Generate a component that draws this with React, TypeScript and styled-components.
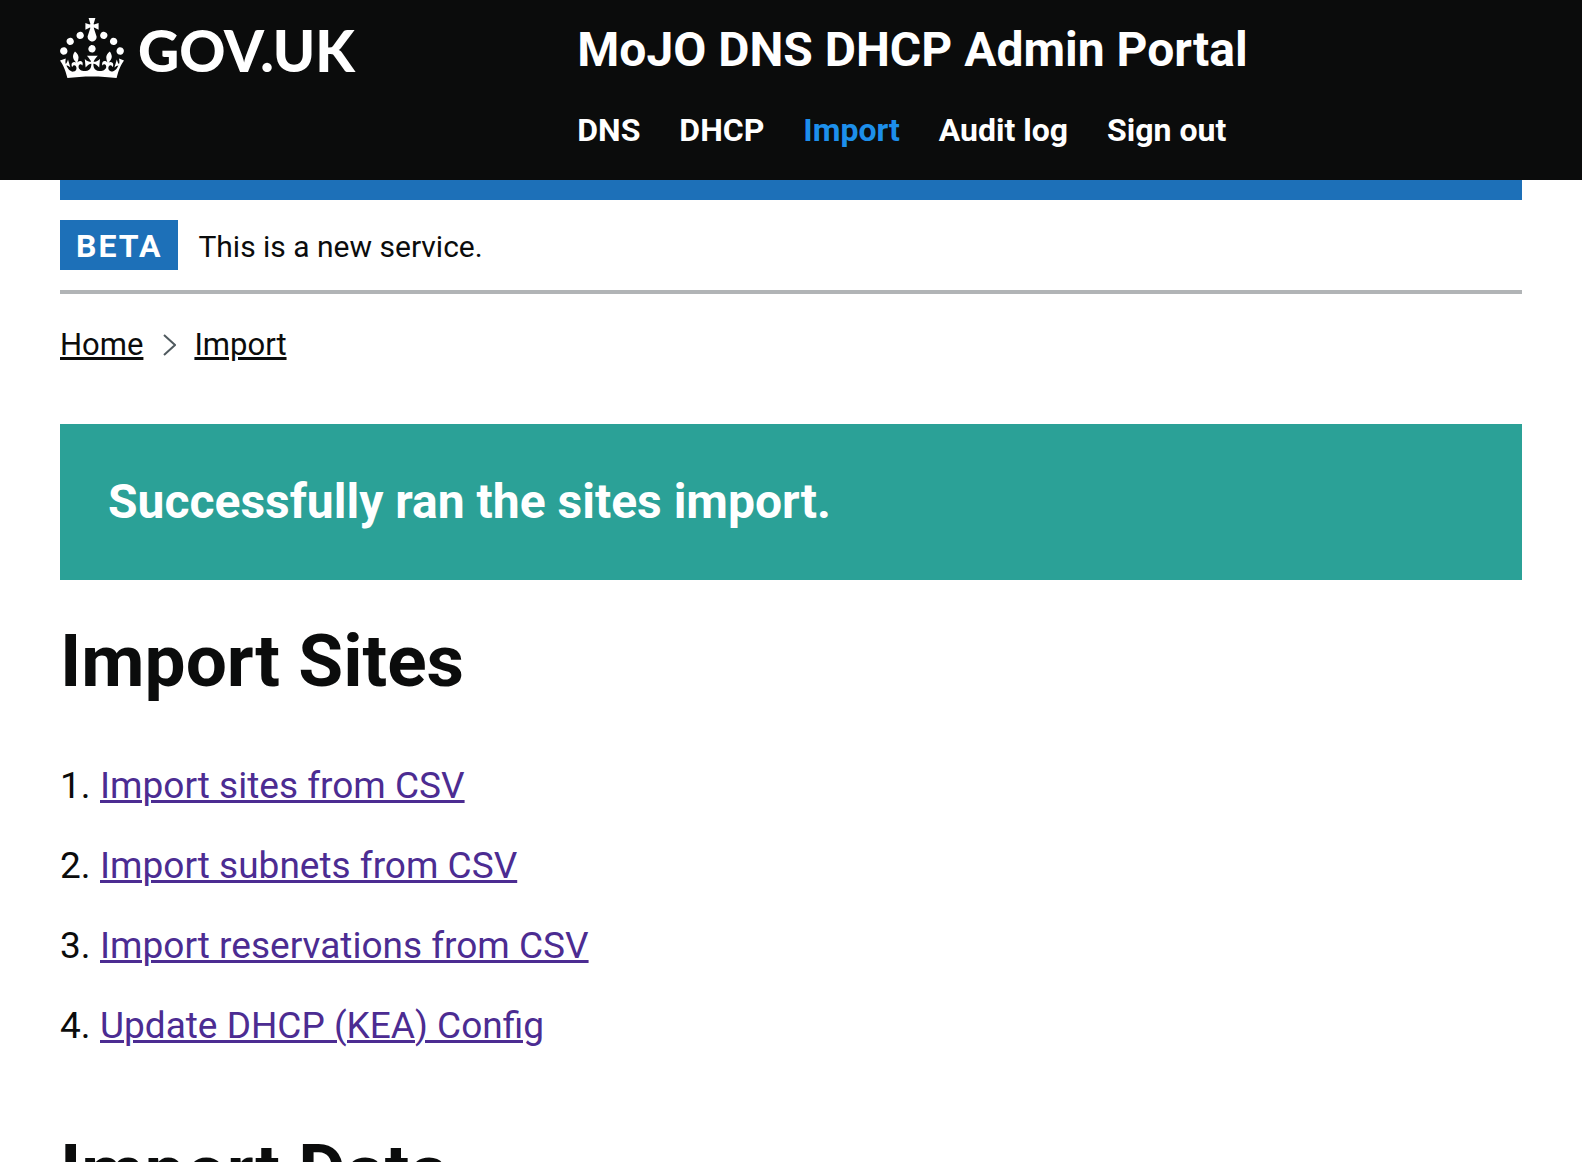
import React from "react";
import styled, { createGlobalStyle } from "styled-components";

const ink = "#0b0c0c";
const blue = "#1d70b8";
const gutter = "60px";

const GlobalStyle = createGlobalStyle`
  *, *::before, *::after { box-sizing: border-box; }
  html { scrollbar-width: none; }
  body {
    margin: 0;
    background: #ffffff;
    color: ${ink};
    font-family: "Roboto", "Liberation Sans", Arial, sans-serif;
  }
`;

const Header = styled.header`
  background: ${ink};
  color: #ffffff;
`;

const HeaderInner = styled.div`
  display: flex;
  gap: 30px;
  padding: 18px ${gutter} 30px;
`;

const LogoColumn = styled.div`
  flex: 0 0 33.33%;
`;

const LogoLink = styled.a`
  display: inline-flex;
  align-items: flex-start;
  gap: 14px;
  color: #ffffff;
  text-decoration: none;
`;

const Crown = styled.svg`
  width: 64px;
  height: 60px;
  fill: currentColor;
`;

const LogoText = styled.span`
  font-family: "Lato", sans-serif;
  font-size: 57px;
  font-weight: 900;
  line-height: 64px;
`;

const HeaderContent = styled.div`
  flex: 1;
  padding-top: 2px;
`;

const ServiceName = styled.a`
  display: block;
  color: #ffffff;
  font-size: 48px;
  font-weight: 700;
  line-height: 60px;
  text-decoration: none;
`;

const NavList = styled.ul`
  display: flex;
  flex-wrap: wrap;
  gap: 39px;
  margin: 30px 0 0;
  padding: 0;
  list-style: none;
`;

const NavLink = styled.a<{ $active?: boolean }>`
  color: ${(p) => (p.$active ? "#1d8feb" : "#ffffff")};
  font-size: 32px;
  font-weight: 700;
  line-height: 40px;
  text-decoration: none;
`;

const Container = styled.div`
  padding: 0 ${gutter};
`;

const BlueBar = styled.div`
  height: 20px;
  background: ${blue};
`;

const PhaseBanner = styled.div`
  display: flex;
  align-items: baseline;
  gap: 20px;
  padding: 20px 0;
  border-bottom: 4px solid #b1b4b6;
  font-size: 30px;
  line-height: 40px;
`;

const PhaseTag = styled.strong`
  padding: 6px 16px 4px;
  background: ${blue};
  color: #ffffff;
  font-size: 32px;
  font-weight: 700;
  letter-spacing: 2px;
`;

const Crumbs = styled.ol`
  display: flex;
  align-items: center;
  gap: 20px;
  margin: 30px 0 58px;
  padding: 0;
  list-style: none;
  font-size: 31px;
  line-height: 42px;
`;

const Crumb = styled.li`
  display: flex;
  align-items: center;
  gap: 18px;
`;

const Link = styled.a<{ $visited?: boolean }>`
  color: ${(p) => (p.$visited ? "#4c2c92" : ink)};
  text-decoration: underline;
  text-decoration-thickness: 3px;
  text-underline-offset: 2px;
`;

const Chevron = styled.svg`
  width: 13px;
  height: 22px;
  fill: none;
  stroke: #505a5f;
  stroke-width: 2;
`;

const Notice = styled.div`
  padding: 48px;
  background: #2ba197;
  color: #ffffff;
  font-size: 48px;
  font-weight: 700;
  line-height: 60px;
`;

const Heading = styled.h1`
  margin: 41px 0 60px;
  font-size: 73px;
  font-weight: 700;
  line-height: 80px;
`;

const Steps = styled.ol`
  display: grid;
  gap: 30px;
  margin: 0 0 80px;
  padding: 0;
  list-style: none;
  font-size: 37px;
  line-height: 50px;
`;

const Step = styled.li`
  display: grid;
  grid-template-columns: 40px 1fr;
`;

const navItems = ["DNS", "DHCP", "Import", "Audit log", "Sign out"];

const steps = [
  "Import sites from CSV",
  "Import subnets from CSV",
  "Import reservations from CSV",
  "Update DHCP (KEA) Config",
];

function CrownIcon() {
  return (
    <Crown viewBox="0 0 32 30" aria-hidden="true">
      <path d="M22.6 10.4c-1 .4-2-.1-2.4-1-.4-.9.1-2 1-2.4.9-.4 2 .1 2.4 1s-.1 2-1 2.4m-5.9 6.7c-.9.4-2-.1-2.4-1-.4-.9.1-2 1-2.4.9-.4 2 .1 2.4 1s-.1 2-1 2.4m10.8-3.7c-1 .4-2-.1-2.4-1-.4-.9.1-2 1-2.4.9-.4 2 .1 2.4 1s0 2-1 2.4m3.3 4.8c-1 .4-2-.1-2.4-1-.4-.9.1-2 1-2.4.9-.4 2 .1 2.4 1s-.1 2-1 2.4M17 4.7l2.3 1.2V2.5l-2.3.7-.2-.2.9-3h-3.4l.9 3-.2.2c-.1.1-2.3-.7-2.3-.7v3.4L15 4.7c.1.1.1.2.2.2l-1.3 4c-.1.2-.1.4-.1.6 0 1.1.8 2 1.9 2.2h.7c1-.2 1.9-1.1 1.9-2.1 0-.2 0-.4-.1-.6l-1.3-4c-.1-.2 0-.2.1-.3m-7.6 5.7c.9.4 2-.1 2.4-1 .4-.9-.1-2-1-2.4-.9-.4-2 .1-2.4 1s0 2 1 2.4m-5 3c.9.4 2-.1 2.4-1 .4-.9-.1-2-1-2.4-.9-.4-2 .1-2.4 1s.1 2 1 2.4m-3.2 4.8c.9.4 2-.1 2.4-1 .4-.9-.1-2-1-2.4-.9-.4-2 .1-2.4 1s0 2 1 2.4m14.8 11c4.4 0 8.6.3 12.3.8 1.1-4.5 2.4-7 3.7-8.8l-2.5-.9c.2 1.3.3 1.9 0 2.7-.4-.4-.8-1.1-1.1-2.3l-1.2 4c.7-.5 1.3-.8 2-.9-1.1 2.5-2.6 3.1-3.5 3-1.1-.2-1.7-1.2-1.5-2.1.3-1.2 1.5-1.5 2.1-.1 1.1-2.3-.8-3-2-2.3 1.9-1.9 2.1-3.5.6-5.6-2.1 1.6-2.1 3.2-1.2 5.5-1.2-1.4-3.2-.6-2.5 1.6.9-1.4 2.1-.5 1.9.8-.2 1.1-1.7 2.1-3.5 1.9-2.7-.2-2.9-2.1-2.9-3.6.7-.1 1.9.5 2.9 1.9l.4-4.3c-1.1 1.1-2.1 1.4-3.2 1.4.4-1.2 2.1-3 2.1-3h-5.4s1.7 1.9 2.1 3c-1.1 0-2.1-.2-3.2-1.4l.4 4.3c1-1.4 2.2-2 2.9-1.9-.1 1.5-.2 3.4-2.9 3.6-1.9.2-3.4-.8-3.5-1.9-.2-1.3 1-2.2 1.9-.8.7-2.3-1.2-3-2.5-1.6.9-2.2.9-3.9-1.2-5.5-1.5 2-1.3 3.7.6 5.6-1.2-.7-3.1 0-2 2.3.6-1.4 1.8-1.1 2.1.1.2.9-.3 1.9-1.5 2.1-.9.2-2.4-.5-3.5-3 .6 0 1.2.3 2 .9l-1.2-4c-.3 1.1-.7 1.9-1.1 2.3-.3-.8-.2-1.4 0-2.7l-2.9.9C1.3 23 2.6 25.5 3.7 30c3.7-.5 7.9-.8 12.3-.8" />
    </Crown>
  );
}

export default function App() {
  return (
    <>
      <GlobalStyle />
      <Header>
        <HeaderInner>
          <LogoColumn>
            <LogoLink href="#home">
              <CrownIcon />
              <LogoText>GOV.UK</LogoText>
            </LogoLink>
          </LogoColumn>
          <HeaderContent>
            <ServiceName href="#service">MoJO DNS DHCP Admin Portal</ServiceName>
            <nav>
              <NavList>
                {navItems.map((item) => (
                  <li key={item}>
                    <NavLink href="#nav" $active={item === "Import"}>
                      {item}
                    </NavLink>
                  </li>
                ))}
              </NavList>
            </nav>
          </HeaderContent>
        </HeaderInner>
      </Header>
      <Container>
        <BlueBar />
        <PhaseBanner>
          <PhaseTag>BETA</PhaseTag>
          <span>This is a new service.</span>
        </PhaseBanner>
        <nav>
          <Crumbs>
            <Crumb>
              <Link href="#home">Home</Link>
            </Crumb>
            <Crumb>
              <Chevron viewBox="0 0 13 22" aria-hidden="true">
                <path d="M1 1l11 10L1 21" />
              </Chevron>
              <Link href="#import">Import</Link>
            </Crumb>
          </Crumbs>
        </nav>
        <main>
          <Notice role="status">Successfully ran the sites import.</Notice>
          <Heading>Import Sites</Heading>
          <Steps>
            {steps.map((step, index) => (
              <Step key={step}>
                <span>{index + 1}.</span>
                <span>
                  <Link href="#step" $visited>
                    {step}
                  </Link>
                </span>
              </Step>
            ))}
          </Steps>
          <Heading as="h2">Import Data</Heading>
        </main>
      </Container>
    </>
  );
}
